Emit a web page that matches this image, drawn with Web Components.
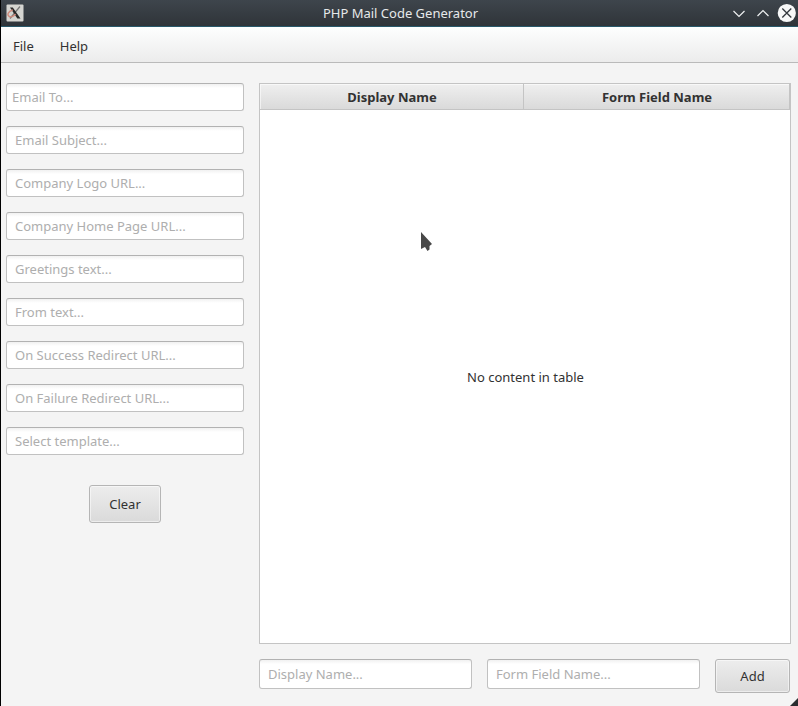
<!DOCTYPE html>
<html lang="en">
<head>
<meta charset="utf-8">
<title>PHP Mail Code Generator</title>
<style>
html, body { margin: 0; height: 100%; overflow: hidden; }
body { font: 13px "Noto Sans", sans-serif; color: #323232; background: #f4f4f4; }
</style>
</head>
<body>
<mail-app></mail-app>
<script>
function define(name, html) {
  const t = document.createElement('template');
  t.innerHTML = html;
  customElements.define(name, class extends HTMLElement {
    constructor() {
      super();
      this.attachShadow({ mode: 'open' }).append(t.content.cloneNode(true));
    }
  });
}

define('title-bar', `
<style>
:host { display: grid; grid-template-columns: 72px 1fr 72px; align-items: center; height: 27px; box-sizing: border-box;
  background: linear-gradient(#3e454c, #2f3439); border-bottom: 1px solid #28586a; color: #e6e8ea; }
.t { text-align: center; line-height: 26px; padding-left: 2px; }
svg { display: block; }
.i { margin-left: 5px; }
</style>
<svg class="i" width="18" height="18" viewBox="0 0 18 18">
  <rect x=".5" y=".5" width="17" height="17" rx="1" fill="#d5d5d1"/>
  <path d="M14 2.500 4 14.500" stroke="#777" stroke-width="1.200"/>
  <path d="M4 3.500h2.800L14.500 14.500h-3.200z" fill="#292929"/>
  <path d="M6.800 6C1.500 7.500 1 11 3.200 12.500c2 1 5-.5 6.300-2.500" fill="none" stroke="#cf8a7c" stroke-width="1.400"/>
</svg>
<div class="t"><slot></slot></div>
<svg width="72" height="26" viewBox="0 0 72 26" fill="none">
  <path d="M7.500 11 13 16.500 18.500 11M31.500 16 37 10.500 42.500 16" stroke="#eef0f1" stroke-width="1.200"/>
  <circle cx="60.800" cy="13" r="9.100" fill="#f7f8f8"/>
  <path d="m56.300 8.500 9 9m0-9-9 9" stroke="#34393e" stroke-width="1.300"/>
</svg>`);

define('menu-bar', `
<style>
:host { display: flex; gap: 26px; padding-left: 12px; height: 36px; box-sizing: border-box; line-height: 39px;
  background: linear-gradient(#fdfefe, #ececec); border-bottom: 1px solid #bababa; }
</style><slot></slot>`);

define('text-field', `
<style>
:host { display: flex; align-items: center; box-sizing: border-box; height: 28px; padding-left: var(--pad, 8px);
  border: 1px solid #c1c1c1; border-top-color: #b2b2b2; border-radius: 3px; color: #aeaeae;
  background: linear-gradient(#f1f1f1, #fff 4px); white-space: nowrap; }
</style><slot></slot>`);

define('push-button', `
<style>
:host { display: flex; align-items: center; justify-content: center; box-sizing: border-box;
  border: 1px solid #b5b5b5; border-radius: 3px; background: linear-gradient(#ededed, #dadada); box-shadow: inset 0 0 0 1px #ffffff80; }
</style><slot></slot>`);

define('data-table', `
<style>
:host { display: flex; flex-direction: column; box-sizing: border-box; border: 1px solid #c4c4c4; background: #fff; }
.h { display: grid; grid-template-columns: 264px 1fr; height: 26px; box-sizing: border-box; border-bottom: 1px solid #c4c4c4;
  background: linear-gradient(#efefef, #dadada); font-weight: bold; line-height: 26px; text-align: center; box-shadow: inset 1px 1px 0 #ffffff90; }
.h div { border-right: 1px solid #c4c4c4; padding-left: 1px; }
.b { flex: 1; display: grid; place-items: center; padding-left: 1px; }
</style>
<div class="h"><div><slot name="a"></slot></div><div><slot name="b"></slot></div></div>
<div class="b"><slot></slot></div>`);

define('mail-app', `
<style>
:host { display: block; height: 706px; box-sizing: border-box; background: #f4f4f4; position: relative; }
.w { border-left: 1px solid #000; height: 706px; box-sizing: border-box; }
main { display: grid; grid-template-columns: 238px 532px; column-gap: 15px; padding: 20px 0 0 5px; }
.f { display: flex; flex-direction: column; gap: 15px; }
.f push-button { width: 72px; height: 38px; align-self: center; margin-top: 15px; }
data-table { height: 561px; }
.a { display: grid; grid-template-columns: 213px 213px 75px; gap: 15px; margin-top: 15px; }
.a text-field { height: 30px; }
.a push-button { height: 34px; }
.c, .g { position: absolute; display: block; }
.c { left: 418px; top: 229px; }
.g { right: 0; bottom: 0; }
</style>
<div class="w">
<title-bar>PHP Mail Code Generator</title-bar>
<menu-bar><span>File</span><span>Help</span></menu-bar>
<main>
<div class="f">
<text-field style="--pad:5px">Email To...</text-field>
<text-field>Email Subject...</text-field>
<text-field>Company Logo URL...</text-field>
<text-field>Company Home Page URL...</text-field>
<text-field>Greetings text...</text-field>
<text-field>From text...</text-field>
<text-field>On Success Redirect URL...</text-field>
<text-field>On Failure Redirect URL...</text-field>
<text-field>Select template...</text-field>
<push-button>Clear</push-button>
</div>
<div>
<data-table><span slot="a">Display Name</span><span slot="b">Form Field Name</span>No content in table</data-table>
<div class="a"><text-field>Display Name...</text-field><text-field>Form Field Name...</text-field><push-button>Add</push-button></div>
</div>
</main>
</div>
<svg class="c" width="20" height="26" viewBox="0 0 20 26"><path d="M3 3v17l4-2 2.500 4 2-1.500V17l2.500-2z" fill="#484848"/></svg>
<svg class="g" width="8" height="8" viewBox="0 0 8 8"><path d="M8 0v8H0z" fill="#292c2f"/></svg>`);
</script>
</body>
</html>
